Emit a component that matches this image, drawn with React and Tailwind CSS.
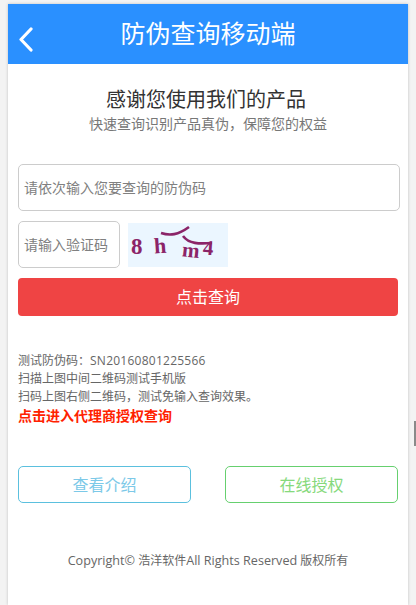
export default function App() {
  return (
    <div className="relative h-[605px] w-[416px] overflow-hidden bg-[#f3f3f3] pt-1 font-['Open_Sans','Noto_Sans_CJK_SC',sans-serif]">
      <div className="mx-2 h-[601px] w-[400px] bg-white shadow-[0_0_3px_rgba(0,0,0,0.2)]">
        <header className="relative flex h-[60px] items-center justify-center bg-[#2a90ff] text-[25px] text-white">
          <svg className="absolute left-[9px] top-[22px]" width="18" height="26" viewBox="0 0 18 26" fill="none">
            <path d="M14 3 L4 13.5 L14 24" stroke="white" strokeWidth="3.2" strokeLinecap="round" strokeLinejoin="round" />
          </svg>
          <span>防伪查询移动端</span>
        </header>

        <div className="px-[10px]">
          <div className="pt-[22px] pr-1 text-center">
            <h1 className="text-[20px] leading-[28px] text-[#333333]">感谢您使用我们的产品</h1>
            <p className="pl-1 text-[14px] leading-[20px] text-[#777777]">快速查询识别产品真伪，保障您的权益</p>
          </div>

          <div className="mt-[30px] flex h-[47px] w-[382px] items-center rounded-[5px] border border-[#cccccc] px-[5px] text-[14px] text-[#808080]">
            请依次输入您要查询的防伪码
          </div>

          <div className="mt-[10px] flex items-center gap-2">
            <div className="flex h-[47px] w-[102px] items-center rounded-[5px] border border-[#cccccc] px-[5px] text-[14px] whitespace-nowrap text-[#808080]">
              请输入验证码
            </div>
            <svg width="100" height="44" viewBox="0 0 100 44" className="bg-[#ebf6ff]">
              <g fill="#8b2468" fontFamily="'Liberation Serif', serif" fontWeight="700">
                <text x="3" y="31" fontSize="23">8</text>
                <text x="26" y="30" fontSize="22" transform="rotate(-4 32 24)">h</text>
                <text x="54" y="34" fontSize="21" transform="rotate(6 62 28)">m</text>
                <text x="75" y="32" fontSize="21" transform="rotate(4 82 26)">4</text>
              </g>
              <path d="M33 10 C42 13 50 12 61 4" stroke="#8b2468" strokeWidth="2.6" fill="none" />
              <path d="M55 13 C61 21 71 21 84 20" stroke="#8b2468" strokeWidth="2.6" fill="none" />
            </svg>
          </div>

          <button className="mt-[10px] flex h-[38px] w-[380px] items-center justify-center rounded-[4px] bg-[#ef4444] text-[16px] text-white">
            点击查询
          </button>

          <div className="mt-[36px] text-[12px] leading-[18px] text-[#666666]">
            <p>测试防伪码：<span className="tracking-[0.25px]">SN20160801225566</span></p>
            <p>扫描上图中间二维码测试手机版</p>
            <p>扫码上图右侧二维码，测试免输入查询效果。</p>
            <p className="text-[14px] leading-[20px] font-bold text-[#ff2200]">点击进入代理商授权查询</p>
          </div>

          <div className="mt-[40px] flex w-[380px] justify-between">
            <button className="flex h-[37px] w-[173px] items-center justify-center rounded-[5px] border border-[#5bc0de] text-[16px] text-[#7cc9e8]">
              查看介绍
            </button>
            <button className="flex h-[37px] w-[173px] items-center justify-center rounded-[5px] border border-[#66d06f] text-[16px] text-[#86d97c]">
              在线授权
            </button>
          </div>

          <p className="mt-[49px] text-center text-[12px] leading-[18px] text-[#666666]">
            <span className="text-[12.6px]">Copyright©</span> 浩洋软件<span className="text-[12.6px]">All Rights Reserved</span> 版权所有
          </p>
        </div>
      </div>
      <div className="absolute right-0 top-[421px] h-[25px] w-[2px] bg-[#8a8a8a]" />
    </div>
  );
}
